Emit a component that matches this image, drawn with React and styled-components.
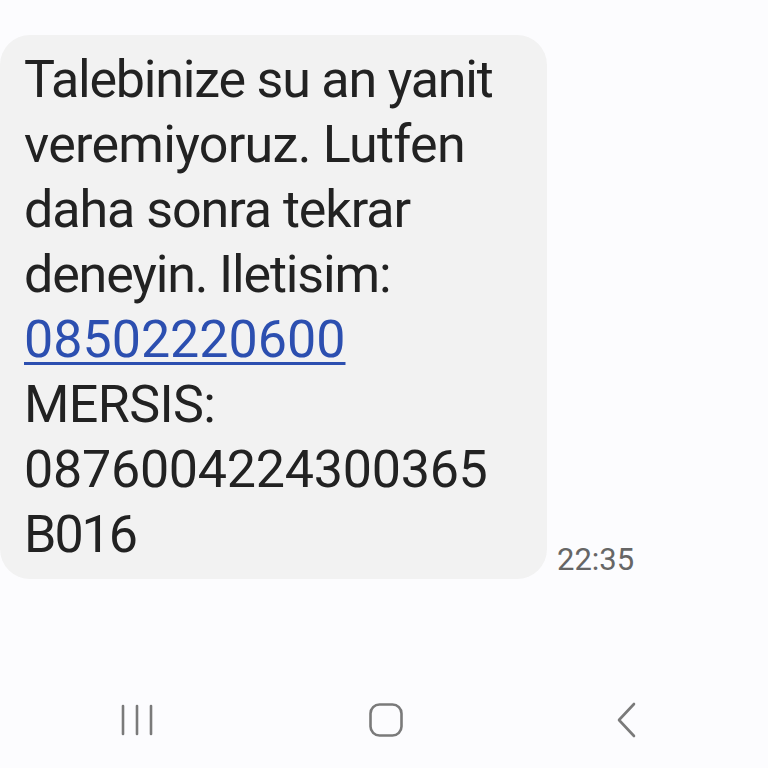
import React from "react";
import styled, { createGlobalStyle } from "styled-components";

const Global = createGlobalStyle`
  html, body { margin: 0; padding: 0; background: #fcfcfe; }
  body { font-family: Roboto, "Noto Sans", "Liberation Sans", sans-serif; }
  #root { min-height: 768px; }
`;

const Screen = styled.div`
  width: 768px;
  height: 768px;
  display: flex;
  flex-direction: column;
  background: #fcfcfe;
  overflow: hidden;
`;

const Thread = styled.div`
  flex: 1;
  padding-top: 35px;
`;

const Row = styled.div`
  display: flex;
  align-items: flex-end;
  gap: 10px;
`;

const Bubble = styled.div`
  width: 523px;
  padding: 12px 0 12px 24px;
  background: #f2f2f2;
  border-radius: 30px;
  color: #222222;
  font-size: 52px;
  line-height: 65px;
`;

const Line = styled.div`
  white-space: nowrap;
  letter-spacing: ${(p) => p.$ls}px;
`;

const Phone = styled.a`
  color: #2c4fb0;
  text-decoration: underline;
  text-decoration-thickness: 3px;
  text-underline-offset: 5px;
`;

const Time = styled.span`
  color: #666666;
  font-size: 31px;
  line-height: 31px;
  margin-bottom: 4px;
`;

const NavBar = styled.div`
  height: 96px;
  display: flex;
  align-items: center;
  justify-content: space-between;
  padding: 0 130px 0 119px;
`;

const Icon = styled.svg`
  display: block;
`;

export default function App() {
  const lines = [
    ["Talebinize su an yanit", -1.2],
    ["veremiyoruz. Lutfen", -0.7],
    ["daha sonra tekrar", -1.05],
    ["deneyin. Iletisim:", -1.15],
  ];
  return (
    <>
      <Global />
      <Screen>
        <Thread>
          <Row>
            <Bubble>
              {lines.map(([l, ls]) => (
                <Line key={l} $ls={ls}>
                  {l}
                </Line>
              ))}
              <Line $ls={0}>
                <Phone href="#">08502220600</Phone>
              </Line>
              <Line $ls={-0.6}>MERSIS:</Line>
              <Line $ls={-0.25}>0876004224300365</Line>
              <Line $ls={-2}>B016</Line>
            </Bubble>
            <Time>22:35</Time>
          </Row>
        </Thread>
        <NavBar>
          <Icon width="36" height="34" viewBox="0 0 36 34">
            <g stroke="#7a7a7a" strokeWidth="2.6" strokeLinecap="round">
              <line x1="4" y1="3" x2="4" y2="31" />
              <line x1="18" y1="3" x2="18" y2="31" />
              <line x1="32" y1="3" x2="32" y2="31" />
            </g>
          </Icon>
          <Icon width="36" height="36" viewBox="0 0 36 36">
            <rect
              x="2.5"
              y="2.5"
              width="31"
              height="31"
              rx="9"
              fill="none"
              stroke="#7a7a7a"
              strokeWidth="2.6"
            />
          </Icon>
          <Icon width="22" height="36" viewBox="0 0 22 36">
            <polyline
              points="18,2 3,18 18,34"
              fill="none"
              stroke="#7a7a7a"
              strokeWidth="2.6"
              strokeLinecap="round"
              strokeLinejoin="round"
            />
          </Icon>
        </NavBar>
      </Screen>
    </>
  );
}
